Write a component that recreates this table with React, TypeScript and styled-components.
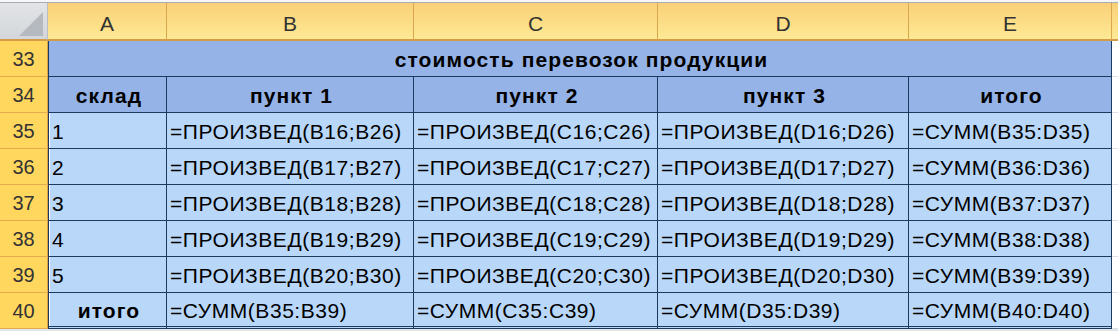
import styled, { createGlobalStyle } from "styled-components";

const GlobalStyle = createGlobalStyle`
  html, body {
    margin: 0;
    padding: 0;
    background: #fff;
    overflow: hidden;
  }
  body {
    font-family: "Liberation Sans", Arial, sans-serif;
  }
`;

const LINE = "#1c3a5e";
const COLS = ["A", "B", "C", "D", "E"];
const WIDTHS = [119, 247, 244, 251, 203];

const Window = styled.div`
  width: 1118px;
  height: 331px;
  background: #e4e6e9;
`;

const TopStrip = styled.div`
  height: 2px;
  background: #f7f7f7;
  border-bottom: 1px solid #a7adb4;
`;

const Sheet = styled.div`
  display: grid;
  grid-template-columns: 48px ${WIDTHS.map((w) => w + "px").join(" ")} 1fr;
  grid-template-rows: 38px repeat(8, 36px);
  background: #fff;
`;

const Corner = styled.div`
  position: relative;
  box-sizing: border-box;
  background: linear-gradient(#e2e4e7, #d3d6da);
  border-right: 1px solid #b9bec5;
  border-bottom: 2px solid #d49c46;
  &::after {
    content: "";
    position: absolute;
    right: 4px;
    bottom: 3px;
    width: 0;
    height: 0;
    border-left: 24px solid transparent;
    border-bottom: 24px solid #b5bac0;
  }
`;

const ColHead = styled.div`
  box-sizing: border-box;
  display: flex;
  align-items: center;
  justify-content: center;
  padding-top: 5px;
  background: linear-gradient(#f9d078, #ffe994);
  border-right: 1px solid #dba64e;
  border-bottom: 2px solid #d49c46;
  color: #333;
  font-size: 21px;
`;

const RowHead = styled.div`
  box-sizing: border-box;
  display: flex;
  align-items: center;
  justify-content: center;
  padding-top: 2px;
  background: #ffd75f;
  border-right: 1px solid #d9a247;
  border-bottom: 1px solid #e3ab4f;
  color: #333;
  font-size: 20px;
`;

const Cell = styled.div<{
  $head?: boolean;
  $bold?: boolean;
  $center?: boolean;
  $first?: boolean;
  $span?: number;
  $last?: boolean;
}>`
  box-sizing: border-box;
  display: flex;
  align-items: center;
  justify-content: ${(p) => (p.$center ? "center" : "flex-start")};
  padding: 2px 0 0 3px;
  grid-column: ${(p) => (p.$span ? `span ${p.$span}` : "auto")};
  background: ${(p) => (p.$head ? "#95b3e6" : "#b9d7f9")};
  border-right: 1px solid ${LINE};
  border-bottom: ${(p) => (p.$last ? `3px double ${LINE}` : `1px solid ${LINE}`)};
  border-left: ${(p) => (p.$first ? `1px solid ${LINE}` : "none")};
  box-shadow: ${(p) => (p.$first && !p.$head ? "inset 1px 0 #fff" : "none")};
  color: #000;
  font-size: 21px;
  font-weight: ${(p) => (p.$bold ? 700 : 400)};
  letter-spacing: ${(p) => (p.$bold ? "1.1px" : "0.55px")};
  white-space: nowrap;
  overflow: hidden;
`;

const Filler = styled.div<{ $head?: boolean }>`
  box-sizing: border-box;
  background: ${(p) => (p.$head ? "linear-gradient(#f9d078, #ffe994)" : "#fff")};
  border-bottom: ${(p) => (p.$head ? "2px solid #d49c46" : "1px solid #dbe1ea")};
`;

const rows = [1, 2, 3, 4, 5].map((n, i) => [
  String(n),
  `=ПРОИЗВЕД(B${16 + i};B${26 + i})`,
  `=ПРОИЗВЕД(C${16 + i};C${26 + i})`,
  `=ПРОИЗВЕД(D${16 + i};D${26 + i})`,
  `=СУММ(B${35 + i}:D${35 + i})`,
]);

const totals = ["=СУММ(B35:B39)", "=СУММ(C35:C39)", "=СУММ(D35:D39)", "=СУММ(B40:D40)"];

export default function App() {
  return (
    <Window>
      <GlobalStyle />
      <TopStrip />
      <Sheet>
        <Corner />
        {COLS.map((c) => (
          <ColHead key={c}>{c}</ColHead>
        ))}
        <Filler $head />

        <RowHead>33</RowHead>
        <Cell $head $bold $center $first $span={5}>
          стоимость перевозок продукции
        </Cell>
        <Filler />

        <RowHead>34</RowHead>
        {["склад", "пункт 1", "пункт 2", "пункт 3", "итого"].map((t, i) => (
          <Cell key={t} $head $bold $center $first={i === 0}>
            {t}
          </Cell>
        ))}
        <Filler />

        {rows.map((r, ri) => [
          <RowHead key={`h${ri}`}>{35 + ri}</RowHead>,
          ...r.map((t, ci) => (
            <Cell key={`${ri}-${ci}`} $first={ci === 0}>
              {t}
            </Cell>
          )),
          <Filler key={`f${ri}`} />,
        ])}

        <RowHead>40</RowHead>
        <Cell $first $bold $center $last>
          итого
        </Cell>
        {totals.map((t) => (
          <Cell key={t} $last>
            {t}
          </Cell>
        ))}
        <Filler />
      </Sheet>
    </Window>
  );
}
